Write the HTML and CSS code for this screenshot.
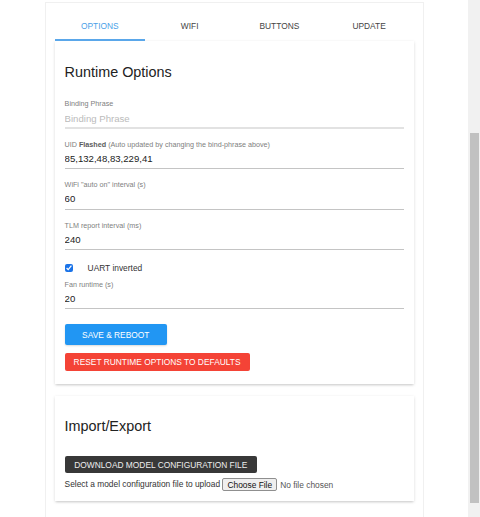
FILE: index.html
```html
<!DOCTYPE html>
<html lang="en">
  <head>
    <meta charset="UTF-8" />
    <meta name="viewport" content="width=device-width, initial-scale=1.0" />
    <title>Runtime Options</title>
    <link rel="stylesheet" href="styles.css">
  </head>

  <body>
    <div class="page">
      <div class="container">
        <nav class="tabs">
          <a class="tab active">OPTIONS</a>
          <a class="tab">WIFI</a>
          <a class="tab">BUTTONS</a>
          <a class="tab">UPDATE</a>
        </nav>

        <section class="card">
          <h2>Runtime Options</h2>
          <form id="optionsForm">
            <div class="field first">
              <label>Binding Phrase</label>
              <input type="text" placeholder="Binding Phrase" />
            </div>
            <div class="field">
              <label>UID <b>Flashed</b> (Auto updated by changing the bind-phrase above)</label>
              <input type="text" value="85,132,48,83,229,41" />
            </div>
            <div class="field">
              <label>WiFi "auto on" interval (s)</label>
              <input type="text" value="60" />
            </div>
            <div class="field">
              <label>TLM report interval (ms)</label>
              <input type="text" value="240" />
            </div>
            <div class="check">
              <input type="checkbox" checked />
              <span>UART inverted</span>
            </div>
            <div class="field compact">
              <label>Fan runtime (s)</label>
              <input type="text" value="20" />
            </div>
            <button type="submit" class="btn btn-blue">SAVE &amp; REBOOT</button>
            <button type="button" class="btn btn-red">RESET RUNTIME OPTIONS TO DEFAULTS</button>
          </form>
        </section>

        <section class="card card-io">
          <h2>Import/Export</h2>
          <button type="button" class="btn btn-dark">DOWNLOAD MODEL CONFIGURATION FILE</button>
          <div class="upload">
            Select a model configuration file to upload
            <input type="file" />
          </div>
        </section>
      </div>
    </div>

    <div class="scrollbar"><div class="thumb"></div></div>
  </body>
</html>
```

FILE: styles.css
```css
html, body {
  height: 100%;
}
body {
  margin: 0;
  font-family: 'Liberation Sans', Arial, sans-serif;
  background: #fff;
  color: #222;
  display: flex;
  overflow: hidden;
}
.page {
  flex: 1;
  height: 517px;
  overflow: hidden;
}
.container {
  box-sizing: border-box;
  width: 379px;
  margin: 2px 0 0 45px;
  padding: 0 9px 40px;
  border: 1px solid #f0f0f0;
}
.tabs {
  display: flex;
}
.tab {
  flex: 1;
  text-align: center;
  font-size: 8.4px;
  line-height: 12px;
  padding: 17px 0 7px;
  color: #444;
  border-bottom: 2px solid transparent;
  cursor: pointer;
}
.tab.active {
  color: #4a9fe8;
  border-bottom-color: #5aa7ea;
}
.card {
  background: #fff;
  padding: 9.6px 9.6px 12.7px;
  box-shadow: 0 1px 3px rgba(0, 0, 0, 0.14), 0 2px 2px -1px rgba(0, 0, 0, 0.1);
  margin-bottom: 12px;
}
.card-io {
  padding-bottom: 9.6px;
}
h2 {
  font-size: 14.4px;
  font-weight: normal;
  line-height: 17px;
  margin: 13px 0 18px;
  color: #222;
}
.field {
  margin-top: 11px;
}
.field label {
  display: block;
  font-size: 7.2px;
  line-height: 9px;
  color: #808080;
}
.field label b {
  color: #5c5c5c;
}
.field input {
  display: block;
  width: 100%;
  box-sizing: border-box;
  height: 20.5px;
  padding: 3.5px 0 4px;
  border: none;
  border-bottom: 1px solid #c4c4c4;
  outline: none;
  font-family: inherit;
  font-size: 9.6px;
  line-height: 12px;
  color: #222;
  background: transparent;
}
.field.first input {
  height: 21px;
  padding: 5px 0 2px;
  border-bottom: 2px solid #e2e2e2;
}
.field.first input::placeholder {
  color: #bbb;
}
.field.compact {
  margin-top: 5.5px;
}
.check {
  display: flex;
  align-items: center;
  gap: 15px;
  height: 12px;
  margin-top: 12px;
  font-size: 8.4px;
  color: #333;
}
.check input {
  width: 8px;
  height: 8px;
  margin: 0;
  accent-color: #1a73e8;
}
.btn {
  display: block;
  border: none;
  border-radius: 2px;
  font-family: inherit;
  font-size: 8.4px;
  color: #fff;
  cursor: pointer;
  padding: 0;
}
.btn-blue {
  margin-top: 15px;
  height: 21px;
  padding: 0 17.5px;
  background: #2196f3;
  box-shadow: 0 1px 2px rgba(0, 0, 0, 0.15);
}
.btn-red {
  margin-top: 7.7px;
  height: 18.3px;
  padding: 0 9px;
  background: #f44336;
}
.btn-dark {
  margin-top: 21px;
  height: 16.7px;
  padding: 0 9.6px;
  background: #383838;
  color: #eee;
}
.upload {
  margin-top: 4px;
  font-size: 8.4px;
  line-height: 14px;
  color: #333;
}
.upload input {
  font-family: inherit;
  font-size: 8.4px;
  color: #555;
  vertical-align: middle;
}
.upload input::file-selector-button {
  font-family: inherit;
  font-size: 8.4px;
  height: 13px;
  padding: 0 4px;
  margin-right: 3px;
  border: 1px solid #8f8f8f;
  border-radius: 2px;
  background: #efefef;
  color: #111;
}
.scrollbar {
  width: 12px;
  height: 517px;
  background: #f1f1f1;
  flex-shrink: 0;
}
.thumb {
  margin: 133px 1px 0 2px;
  height: 370px;
  background: #c1c1c1;
}
```
